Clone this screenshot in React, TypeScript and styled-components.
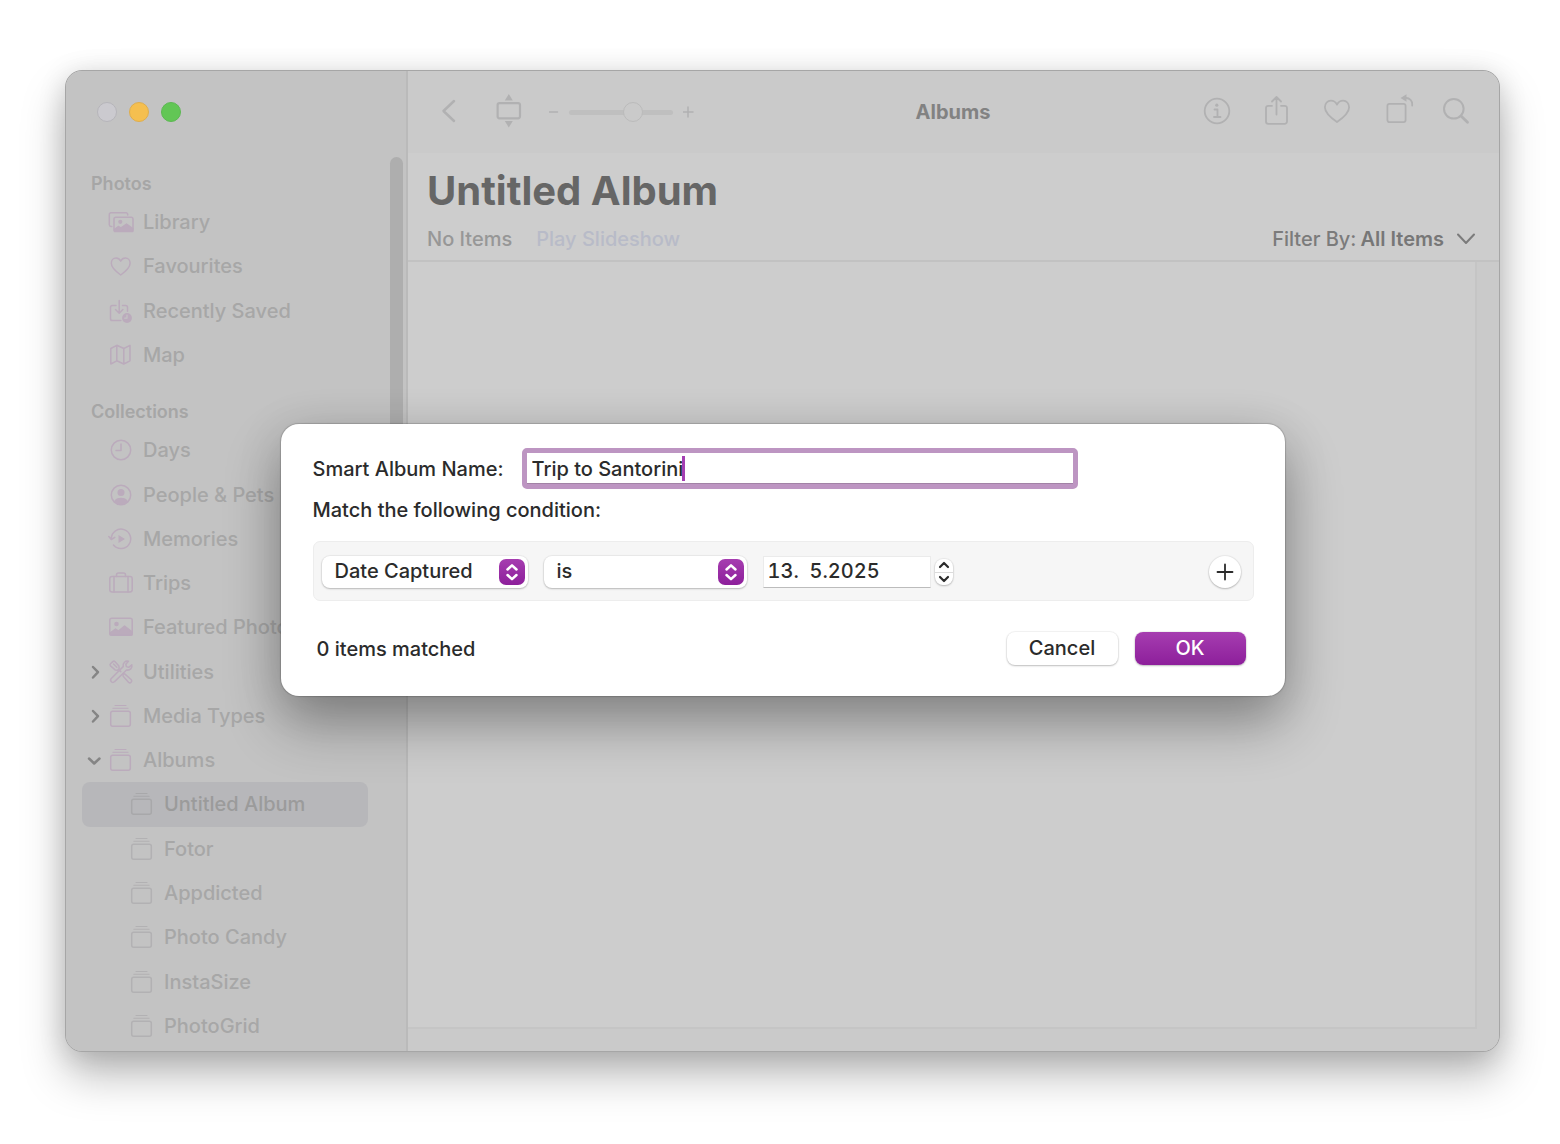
import React, { useState } from "react";
import styled, { createGlobalStyle, css } from "styled-components";

const GlobalStyle = createGlobalStyle`
  *, *::before, *::after { box-sizing: border-box; }
  html, body, #root { height: 100%; }
  body {
    margin: 0;
    background: #fff;
    font-family: Inter, "Liberation Sans", sans-serif;
    font-size: 20px;
    font-weight: 450;
    line-height: 24px;
    color: #2b2b2b;
  }
  button, input, select { font: inherit; color: inherit; }
  h1, h2, p, ul { margin: 0; padding: 0; }
  ul { list-style: none; }
`;

/* ---------- window ---------- */

const Desktop = styled.div`
  display: grid;
  min-height: 100vh;
  padding: 70px 60px 92px 65px;
`;

const Window = styled.div`
  position: relative;
  display: grid;
  grid-template-columns: 342px minmax(0, 1fr);
  border: 1px solid #a6a6a6;
  border-radius: 17px;
  background: #cdcdcd;
  box-shadow: 0 24px 44px rgba(0, 0, 0, 0.26), 0 4px 28px rgba(0, 0, 0, 0.14);
`;

/* ---------- sidebar ---------- */

const Sidebar = styled.aside`
  position: relative;
  display: flex;
  flex-direction: column;
  padding-bottom: 3px;
  border-right: 2px solid #bababa;
  border-radius: 16px 0 0 16px;
  background: #c3c3c3;
  color: #a7a7a7;
`;

const TrafficLights = styled.div`
  display: flex;
  gap: 12px;
  height: 95px;
  padding: 31px 0 0 31px;
`;

const Light = styled.button<{ $fill: string; $edge: string }>`
  width: 20px;
  height: 20px;
  padding: 0;
  border: 1px solid ${(p) => p.$edge};
  border-radius: 50%;
  background: ${(p) => p.$fill};
`;

const Thumb = styled.div`
  position: absolute;
  top: 86px;
  right: 3px;
  width: 13px;
  height: 400px;
  border-radius: 7px;
  background: #aeaeae;
`;

const SectionTitle = styled.h2`
  height: 34px;
  padding-left: 25px;
  font-size: 18px;
  font-weight: 600;
  line-height: 36px;
  color: #a6a6a6;

  ul + & { margin-top: 17px; }
`;

const NavList = styled.ul<{ $rows: number }>`
  display: grid;
  flex: ${(p) => p.$rows} 1 0;
  grid-auto-rows: minmax(0, 1fr);
  padding: 0 38px 0 16px;
`;

const NavLink = styled.a<{ $child?: boolean; $selected?: boolean }>`
  display: grid;
  grid-template-columns: 26px 26px minmax(0, 1fr);
  align-items: center;
  height: 100%;
  padding-left: ${(p) => (p.$child ? 21 : 0)}px;
  border-radius: 8px;
  color: ${(p) => (p.$selected ? "#9b9b9b" : "inherit")};
  background: ${(p) => (p.$selected ? "#b7b7ba" : "transparent")};
  text-decoration: none;
  white-space: nowrap;
`;

const Disclosure = styled.span`
  display: flex;
  padding-left: 5px;
  color: #858585;
`;

const NavIcon = styled.span<{ $muted?: boolean; $selected?: boolean }>`
  display: flex;
  color: ${(p) => (p.$selected ? "#a8a8aa" : p.$muted ? "#b2b1b3" : "#bbabbc")};
`;

const NavText = styled.span`
  padding-left: 9px;
`;

/* ---------- main area ---------- */

const Main = styled.main`
  display: flex;
  flex-direction: column;
  min-width: 0;
`;

const Toolbar = styled.header`
  display: grid;
  grid-template-columns: 1fr auto 1fr;
  align-items: center;
  height: 82px;
  padding: 0 22px 0 21px;
  border-radius: 0 16px 0 0;
  background: #cacaca;
  color: #b1b1b2;
`;

const ToolGroup = styled.div<{ $end?: boolean }>`
  display: flex;
  align-items: center;
  gap: 20px;
  justify-content: ${(p) => (p.$end ? "flex-end" : "flex-start")};
`;

const ToolButton = styled.button`
  display: grid;
  place-items: center;
  width: 40px;
  height: 40px;
  padding: 0 0 2px;
  border: 0;
  background: none;
`;

const ZoomControl = styled.div`
  display: flex;
  align-items: center;
  gap: 10px;
`;

const ZoomStep = styled.button`
  display: flex;
  padding: 0;
  border: 0;
  background: none;
`;

const ZoomSlider = styled.input`
  appearance: none;
  width: 104px;
  height: 20px;
  margin: 0;
  background: none;

  &::-webkit-slider-runnable-track {
    height: 5px;
    border-radius: 3px;
    background: #bfbfbf;
  }
  &::-webkit-slider-thumb {
    appearance: none;
    width: 20px;
    height: 20px;
    margin-top: -8px;
    border: 1px solid #bbbbbb;
    border-radius: 50%;
    background: #cacaca;
  }
`;

const ToolbarTitle = styled.span`
  font-weight: 700;
  color: #828282;
`;

const AlbumHeader = styled.section`
  padding: 14px 24px 7px 19px;
  border-bottom: 2px solid #c2c2c2;
`;

const AlbumTitle = styled.h1`
  font-size: 40px;
  font-weight: 700;
  line-height: 48px;
  color: #666;
`;

const AlbumMeta = styled.div`
  display: flex;
  align-items: center;
  gap: 24px;
  height: 28px;
  margin-top: 10px;
  color: #979797;
`;

const SlideshowLink = styled.a`
  color: #b8bbc8;
  text-decoration: none;
`;

const FilterButton = styled.button`
  display: flex;
  align-items: center;
  margin-left: auto;
  padding: 0;
  border: 0;
  background: none;
  color: #7b7b7b;

  strong { padding: 0 13px 0 4px; font-weight: 600; color: #777; }
`;

const Canvas = styled.div`
  flex: 1;
  padding: 0 22px 22px 0;
  border-radius: 0 0 16px 0;
  background: #cacaca;
`;

const EmptyAlbum = styled.div`
  height: 100%;
  border: solid #c5c5c5;
  border-width: 0 2px 2px 0;
  background: #cdcdcd;
`;

/* ---------- smart album sheet ---------- */

const SheetLayer = styled.div`
  position: absolute;
  inset: 0;
  display: grid;
  place-items: center;
  padding-bottom: 2px;
`;

const Sheet = styled.form`
  width: min(1004px, 94%);
  padding: 24px 31px 31px 32px;
  border-radius: 18px;
  background: #fff;
  box-shadow: 0 0 1px 1px rgba(0, 0, 0, 0.16), 0 28px 56px rgba(0, 0, 0, 0.32),
    0 6px 48px rgba(0, 0, 0, 0.1);
`;

const NameRow = styled.div`
  display: flex;
  align-items: center;
  gap: 18px;
  height: 41px;
`;

const NameField = styled.div`
  display: flex;
  align-items: center;
  flex: 0 1 556px;
  height: 41px;
  padding-left: 5px;
  border: 5px solid #bd95c2;
  border-radius: 5px;
  box-shadow: inset 0 -1px 0 #a282a6;
`;

const NameInput = styled.input`
  field-sizing: content;
  padding: 0;
  border: 0;
  outline: 0;
  background: none;
  caret-color: transparent;
`;

const Caret = styled.span`
  width: 3px;
  height: 25px;
  margin-left: -1px;
  background: #a43fb2;
`;

const MatchText = styled.p`
  padding-top: 9px;
`;

const Rule = styled.div`
  display: flex;
  align-items: center;
  height: 60px;
  margin-top: 19px;
  padding: 1px 12px 0 8px;
  border: 1px solid #ededed;
  border-radius: 7px;
  background: #f6f6f6;
`;

const raised = css`
  background: #fff;
  box-shadow: 0 0 1px 1px rgba(0, 0, 0, 0.05), 0 1px 2px rgba(0, 0, 0, 0.22);
`;

const PopUp = styled.div<{ $width: number }>`
  position: relative;
  flex: 0 1 ${(p) => p.$width}px;
  margin-right: 16px;
`;

const PopUpSelect = styled.select`
  ${raised}
  appearance: none;
  display: block;
  width: 100%;
  height: 32px;
  padding: 0 34px 2px 13px;
  border: 0;
  border-radius: 8px;
`;

const PopUpBadge = styled.span`
  position: absolute;
  top: 3px;
  right: 3px;
  display: grid;
  place-items: center;
  width: 26px;
  height: 26px;
  border-radius: 7px;
  background: linear-gradient(#a63db0, #8d1f9b);
  color: #fff;
  pointer-events: none;
`;

const DateInput = styled.input`
  width: 168px;
  height: 32px;
  padding: 0 0 2px 4px;
  border: 1px solid #ebebeb;
  border-bottom-color: #bcbcbc;
  background: #fff;
  font-variant-numeric: tabular-nums;
`;

const Stepper = styled.div`
  ${raised}
  width: 18px;
  margin-left: 4px;
  border-radius: 8px;
`;

const StepButton = styled.button`
  display: grid;
  place-items: center;
  width: 18px;
  height: 13px;
  padding: 0;
  border: 0;
  background: none;

  & + & { border-top: 1px solid #dcdcdc; }
`;

const AddButton = styled.button`
  ${raised}
  display: grid;
  place-items: center;
  width: 32px;
  height: 32px;
  margin-left: auto;
  padding: 0;
  border: 0;
  border-radius: 50%;
`;

const Footer = styled.div`
  display: flex;
  align-items: center;
  gap: 17px;
  margin-top: 31px;
  padding: 0 8px 0 4px;
`;

const MatchCount = styled.output`
  margin-right: auto;
`;

const PushButton = styled.button<{ $primary?: boolean }>`
  ${raised}
  width: 111px;
  height: 33px;
  padding: 0 0 1px;
  border: 0;
  border-radius: 8px;
  ${(p) =>
    p.$primary &&
    css`
      background: linear-gradient(#a63db0, #8d1f9b);
      color: #fff;
    `}
`;

/* ---------- icons ---------- */

const Icon = ({ w = 26, h = 26, sw = 1.5, children }: {
  w?: number; h?: number; sw?: number; children: React.ReactNode;
}) => (
  <svg width={w} height={h} viewBox={`0 0 ${w} ${h}`} fill="none" stroke="currentColor"
    strokeWidth={sw} strokeLinecap="round" strokeLinejoin="round" aria-hidden="true">
    {children}
  </svg>
);

const icons: Record<string, React.ReactNode> = {
  library: (
    <>
      <path d="M3.800 17.500H3a1.700 1.700 0 0 1-1.700-1.700V5.500A1.700 1.700 0 0 1 3 3.800h15a1.700 1.700 0 0 1 1.700 1.700v.5" />
      <rect x="6" y="8.300" width="19" height="14" rx="1.800" />
      <circle cx="12.300" cy="12.800" r="2.100" fill="currentColor" stroke="none" />
      <path d="M6.300 20.500l4-3 2.500 1.500 5.700-4 6.300 4.500v3H6.500z" fill="currentColor" />
    </>
  ),
  heart: <path d="M12.700 22C7.500 18.300 3.300 14.800 3.300 10.300c0-3 2-5.200 4.700-5.200 2 0 3.700 1.100 4.700 3 1-1.900 2.700-3 4.700-3 2.700 0 4.700 2.200 4.700 5.200 0 4.500-4.200 8-9.400 11.700z" />,
  saved: (
    <>
      <path d="M8 7.500H4.300a1.800 1.800 0 0 0-1.800 1.800v11.500a1.800 1.800 0 0 0 1.800 1.800h8.500M14.500 7.500h3.200a1.800 1.800 0 0 1 1.800 1.800v4M11.200 2.500v12.500M7.500 11.500l3.700 3.700 3.700-3.700" />
      <circle cx="19" cy="20" r="4.900" fill="currentColor" stroke="none" />
      <path d="M19 17.200v3h-2.300" stroke="#c3c3c3" strokeWidth="1.200" />
    </>
  ),
  map: <path d="M2.800 6.500l6-3.200 7 3.200 6.200-3.200v15.500l-6.200 3.200-7-3.200-6 3.200zM8.800 3.800v15M15.800 6.500v15" />,
  days: <><circle cx="13" cy="13" r="9.700" /><path d="M13 7v6.500H8" /></>,
  people: (
    <>
      <circle cx="13" cy="13" r="9.700" />
      <circle cx="13" cy="10.600" r="3.500" fill="currentColor" stroke="none" />
      <path d="M6 19.500c1.200-2.700 4-3.700 7-3.700s5.800 1 7 3.700c-1.800 2-4.300 3.200-7 3.200s-5.200-1.200-7-3.200z" fill="currentColor" stroke="none" />
    </>
  ),
  memories: (
    <>
      <path d="M3.300 12.500A9.700 9.700 0 1 1 5.500 19M.8 10.500l2.500 3 3.500-2.200" />
      <path d="M10.500 9v8l6.500-4z" fill="currentColor" stroke="none" />
    </>
  ),
  trips: (
    <>
      <rect x="1.800" y="6.500" width="22.400" height="15.500" rx="2.200" />
      <path d="M6 6.500V22M20 6.500V22M8.500 6.500V5a2 2 0 0 1 2-2h5a2 2 0 0 1 2 2v1.500" />
    </>
  ),
  photo: (
    <>
      <rect x="1.800" y="4.300" width="22.400" height="17" rx="2" />
      <circle cx="8.500" cy="10" r="2.300" fill="currentColor" stroke="none" />
      <path d="M2 19l5.500-4 3 2 6-5 7.500 5.800v3.200H2.300z" fill="currentColor" />
    </>
  ),
  tools: (
    <>
      <path d="M4.800 2.600a1.500 1.500 0 0 1 2.100 0l4 4.500.3 2.400-1.700 1.700-2.400-.3-4.600-4a1.500 1.500 0 0 1 0-2.100z" />
      <path d="M5.500 5l3.300 3.300M10.800 10.600l2 2" />
      <path d="M15.500 14.800l1.500.3 6.300 5.700a1.900 1.900 0 0 1-2.600 2.700l-5.500-6.300-.3-1.600z" />
      <path d="M23.800 5.800l-3.100 2.500-2.300-.7-.6-2.300 2.700-3c-3-.8-6 1.500-5.300 5.300L3.300 19.500a2.200 2.200 0 0 0 3.300 3.100L18.500 11c3.400.7 6.200-2 5.300-5.200z" />
    </>
  ),
  album: (
    <>
      <rect x="2.700" y="8.200" width="19.600" height="15" rx="2" />
      <path d="M4.900 5.200h15.200M7 2.500h11" strokeWidth="1.100" />
    </>
  ),
};

type Item = { label: string; icon: string; state?: "open" | "closed"; child?: boolean; selected?: boolean };

const photos: Item[] = [
  { label: "Library", icon: "library" },
  { label: "Favourites", icon: "heart" },
  { label: "Recently Saved", icon: "saved" },
  { label: "Map", icon: "map" },
];

const collections: Item[] = [
  { label: "Days", icon: "days" },
  { label: "People & Pets", icon: "people" },
  { label: "Memories", icon: "memories" },
  { label: "Trips", icon: "trips" },
  { label: "Featured Photos", icon: "photo" },
  { label: "Utilities", icon: "tools", state: "closed" },
  { label: "Media Types", icon: "album", state: "closed" },
  { label: "Albums", icon: "album", state: "open" },
  { label: "Untitled Album", icon: "album", child: true, selected: true },
  { label: "Fotor", icon: "album", child: true },
  { label: "Appdicted", icon: "album", child: true },
  { label: "Photo Candy", icon: "album", child: true },
  { label: "InstaSize", icon: "album", child: true },
  { label: "PhotoGrid", icon: "album", child: true },
];

const Nav = ({ items }: { items: Item[] }) => (
  <NavList $rows={items.length}>
    {items.map((item) => (
      <li key={item.label}>
        <NavLink href="#" $child={item.child} $selected={item.selected}
          aria-current={item.selected ? "page" : undefined}>
          <Disclosure>
            {item.state && (
              <Icon w={16} h={16} sw={2.5}>
                <path d={item.state === "open" ? "M2 6.500l5.200 5L12.500 6.500" : "M6 3l5 5.200L6 13.500"} />
              </Icon>
            )}
          </Disclosure>
          <NavIcon $muted={item.child} $selected={item.selected}><Icon>{icons[item.icon]}</Icon></NavIcon>
          <NavText>{item.label}</NavText>
        </NavLink>
      </li>
    ))}
  </NavList>
);

const Chevrons = () => (
  <PopUpBadge>
    <Icon w={14} h={20} sw={2.5}><path d="M2.500 7.500L7 3.300l4.500 4.200M2.500 13L7 17.200l4.500-4.200" /></Icon>
  </PopUpBadge>
);

export default function App() {
  const [name, setName] = useState("Trip to Santorini");
  const [date, setDate] = useState("13.  5.2025");

  return (
    <>
      <GlobalStyle />
      <Desktop>
        <Window>
          <Sidebar>
            <TrafficLights>
              <Light aria-label="Close" $fill="#cbcacf" $edge="#b6b5ba" />
              <Light aria-label="Minimise" $fill="#f5bf4f" $edge="#dfae4d" />
              <Light aria-label="Zoom" $fill="#62c655" $edge="#5cb852" />
            </TrafficLights>
            <SectionTitle>Photos</SectionTitle>
            <Nav items={photos} />
            <SectionTitle>Collections</SectionTitle>
            <Nav items={collections} />
            <Thumb />
          </Sidebar>

          <Main>
            <Toolbar>
              <ToolGroup>
                <ToolButton aria-label="Back">
                  <Icon w={36} h={36} sw={2.5}><path d="M23 8L12.500 18 23 28" /></Icon>
                </ToolButton>
                <ToolButton aria-label="Fit">
                  <Icon w={36} h={36} sw={2.2}>
                    <rect x="6.600" y="10.100" width="22.400" height="15.200" rx="2" />
                    <path d="M17.800 1l4 6.500h-8zM17.800 34.500l4-6.500h-8z" fill="currentColor" stroke="none" />
                  </Icon>
                </ToolButton>
                <ZoomControl>
                  <ZoomStep aria-label="Zoom out"><Icon w={10} h={12}><path d="M0 6h8.500" /></Icon></ZoomStep>
                  <ZoomSlider type="range" aria-label="Thumbnail size" defaultValue={64} />
                  <ZoomStep aria-label="Zoom in"><Icon w={12} h={12}><path d="M0 6h10M5 1v10" /></Icon></ZoomStep>
                </ZoomControl>
              </ToolGroup>
              <ToolbarTitle>Albums</ToolbarTitle>
              <ToolGroup $end>
                <ToolButton aria-label="Info">
                  <Icon w={36} h={36} sw={1.8}>
                    <circle cx="18" cy="18" r="12.300" />
                    <circle cx="17.800" cy="12.200" r="1.600" fill="currentColor" stroke="none" />
                    <path d="M15.500 16.500h3v7.500M15 24h6.500" />
                  </Icon>
                </ToolButton>
                <ToolButton aria-label="Share">
                  <Icon w={36} h={36} sw={1.8}>
                    <path d="M13 12.800H9.300a2.300 2.300 0 0 0-2.300 2.300v13.500a2.300 2.300 0 0 0 2.300 2.300h16.400a2.300 2.300 0 0 0 2.300-2.300V15.100a2.300 2.300 0 0 0-2.300-2.300H22M17.500 21.500V4.500M13 8.500l4.500-4.500L22 8.500" />
                  </Icon>
                </ToolButton>
                <ToolButton aria-label="Favourite">
                  <Icon w={36} h={36} sw={1.8}>
                    <path d="M18 29C11.300 24.500 5.900 20 5.900 14.300c0-3.900 2.600-6.700 6-6.700 2.700 0 4.900 1.500 6.100 4 1.200-2.500 3.400-4 6.100-4 3.400 0 6 2.800 6 6.700C30.100 20 24.700 24.500 18 29z" />
                  </Icon>
                </ToolButton>
                <ToolButton aria-label="Rotate">
                  <Icon w={36} h={36} sw={1.8}>
                    <rect x="8.400" y="10.900" width="18.200" height="18.200" rx="2" />
                    <path d="M26 5h1a6 6 0 0 1 6.200 6.500v1" />
                    <path d="M21.500 5l6-3.700v7.400z" fill="currentColor" stroke="none" />
                  </Icon>
                </ToolButton>
                <ToolButton aria-label="Search">
                  <Icon w={36} h={36} sw={2}>
                    <circle cx="14.800" cy="15.800" r="9.800" />
                    <path d="M22 23l6.500 6.300" strokeWidth="2.800" />
                  </Icon>
                </ToolButton>
              </ToolGroup>
            </Toolbar>

            <AlbumHeader>
              <AlbumTitle>Untitled Album</AlbumTitle>
              <AlbumMeta>
                <span>No Items</span>
                <SlideshowLink href="#">Play Slideshow</SlideshowLink>
                <FilterButton>
                  Filter By:<strong>All Items</strong>
                  <Icon w={18} h={12} sw={2}><path d="M1 1.500l8 8.500 8-8.500" /></Icon>
                </FilterButton>
              </AlbumMeta>
            </AlbumHeader>
            <Canvas><EmptyAlbum /></Canvas>
          </Main>

          <SheetLayer>
            <Sheet role="dialog" aria-label="Smart album" onSubmit={(e) => e.preventDefault()}>
              <NameRow>
                <label htmlFor="album-name">Smart Album Name:</label>
                <NameField>
                  <NameInput id="album-name" value={name} onChange={(e) => setName(e.target.value)} />
                  <Caret />
                </NameField>
              </NameRow>
              <MatchText>Match the following condition:</MatchText>
              <Rule>
                <PopUp $width={206}>
                  <PopUpSelect aria-label="Field"><option>Date Captured</option></PopUpSelect>
                  <Chevrons />
                </PopUp>
                <PopUp $width={203}>
                  <PopUpSelect aria-label="Comparison"><option>is</option></PopUpSelect>
                  <Chevrons />
                </PopUp>
                <DateInput aria-label="Date" value={date} onChange={(e) => setDate(e.target.value)} />
                <Stepper>
                  <StepButton type="button" aria-label="Later">
                    <Icon w={12} h={8} sw={2.2}><path d="M2 6l4-4 4 4" /></Icon>
                  </StepButton>
                  <StepButton type="button" aria-label="Earlier">
                    <Icon w={12} h={8} sw={2.2}><path d="M2 2l4 4 4-4" /></Icon>
                  </StepButton>
                </Stepper>
                <AddButton type="button" aria-label="Add condition">
                  <Icon w={18} h={18} sw={1.8}><path d="M1.500 9h15M9 1.500v15" /></Icon>
                </AddButton>
              </Rule>
              <Footer>
                <MatchCount>0 items matched</MatchCount>
                <PushButton type="button">Cancel</PushButton>
                <PushButton type="submit" $primary>OK</PushButton>
              </Footer>
            </Sheet>
          </SheetLayer>
        </Window>
      </Desktop>
    </>
  );
}
